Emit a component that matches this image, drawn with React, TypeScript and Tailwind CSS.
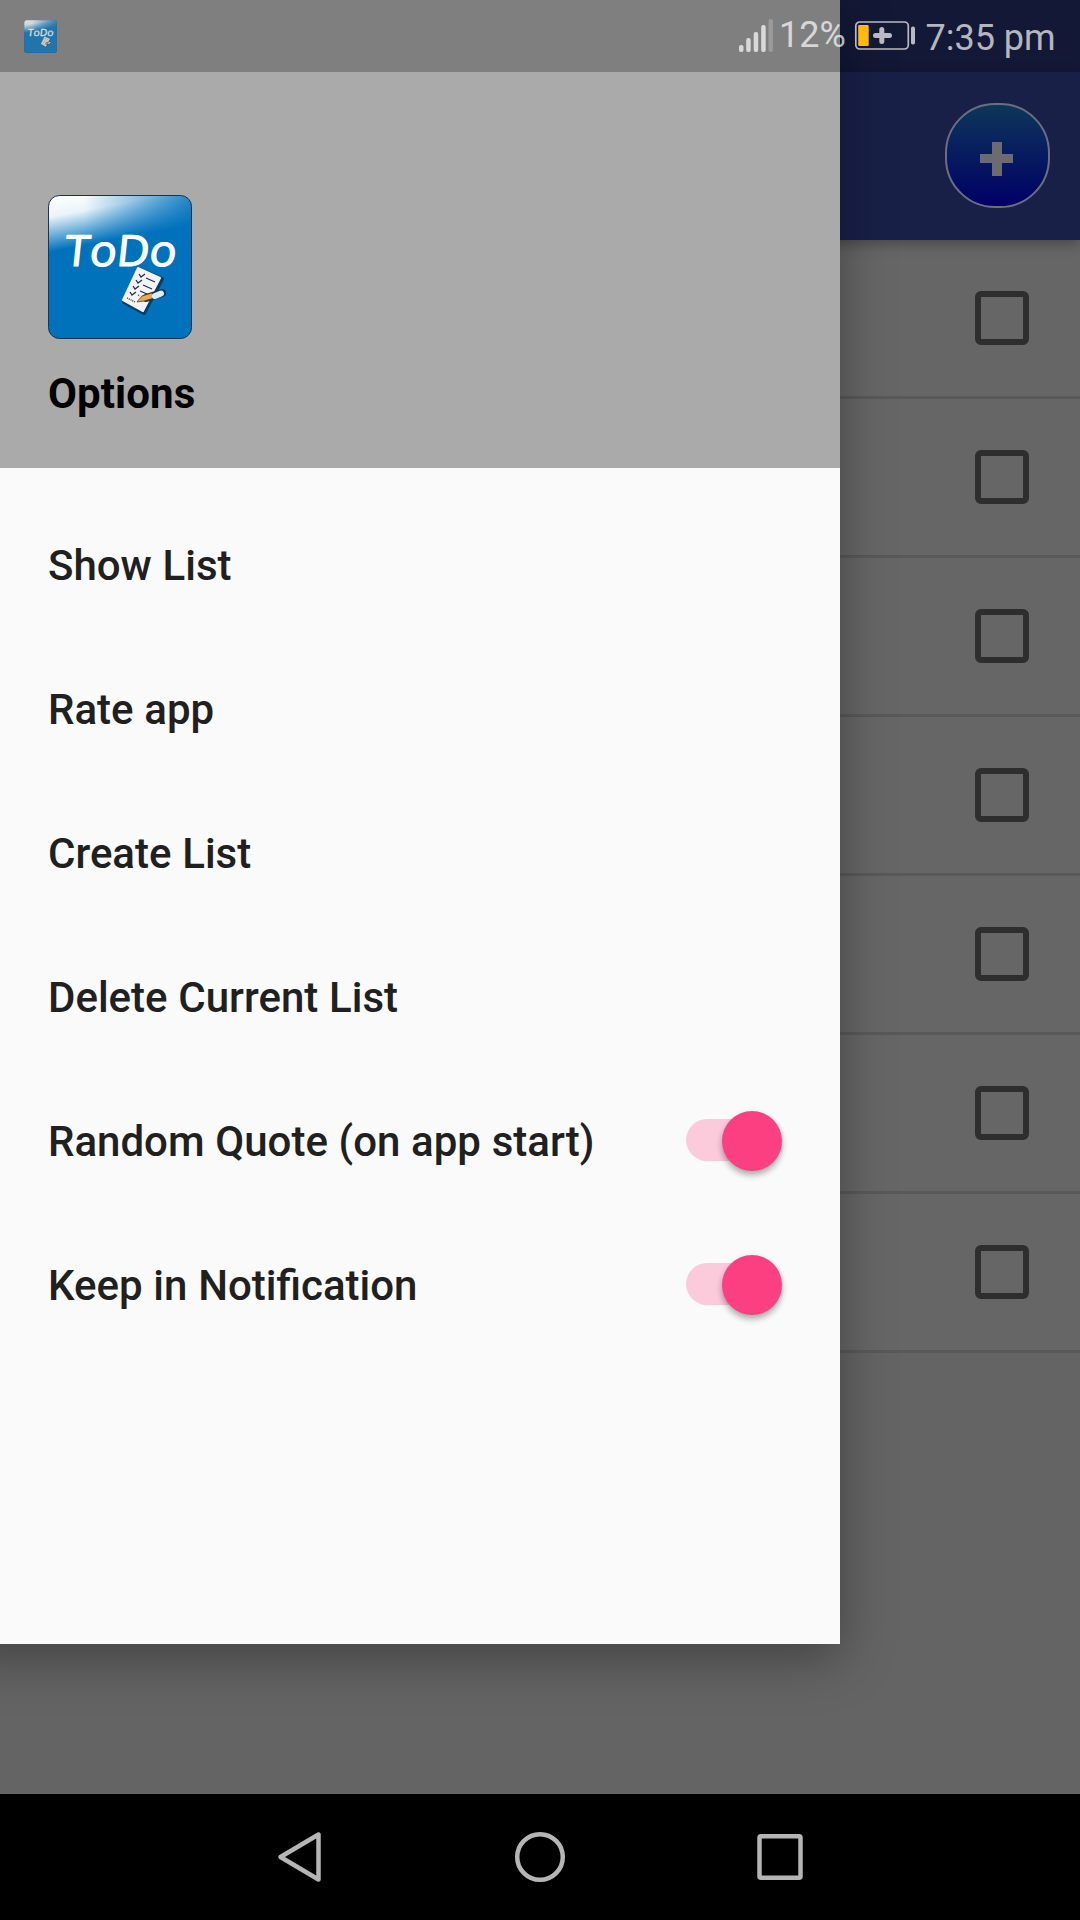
const menuItems = [
  { label: "Show List" },
  { label: "Rate app" },
  { label: "Create List" },
  { label: "Delete Current List" },
  { label: "Random Quote (on app start)", toggle: true },
  { label: "Keep in Notification", toggle: true },
];

function AppLogo({ className, id }: { className: string; id: string }) {
  return (
    <svg className={className} viewBox="0 0 144 144">
      <defs>
        <linearGradient id={id + "-shine"} gradientUnits="userSpaceOnUse" x1="18" y1="0" x2="28" y2="52">
          <stop offset="0" stopColor="#fff" />
          <stop offset="0.35" stopColor="#fff" stopOpacity="0.92" />
          <stop offset="1" stopColor="#fff" stopOpacity="0" />
        </linearGradient>
        <linearGradient id={id + "-fade"} x1="0" y1="0" x2="1" y2="0">
          <stop offset="0.25" stopColor="#0072bc" stopOpacity="0" />
          <stop offset="1" stopColor="#0072bc" stopOpacity="0.8" />
        </linearGradient>
      </defs>
      <rect x="0.5" y="0.5" width="143" height="143" rx="11" fill="#0072bc" />
      <rect x="0.5" y="0.5" width="143" height="143" rx="11" fill={`url(#${id}-shine)`} />
      <rect x="0.5" y="0.5" width="143" height="143" rx="11" fill={`url(#${id}-fade)`} />
      <rect x="0.5" y="0.5" width="143" height="143" rx="11" fill="none" stroke="#173450" />
      <text
        transform="translate(15.5 71) skewX(-6)"
        fill="#fff"
        stroke="#fff"
        strokeWidth="1.2"
        strokeLinejoin="round"
        fontSize="43"
        textLength="112"
        lengthAdjust="spacingAndGlyphs"
        className="font-['Open_Sans']"
      >
        ToDo
      </text>
      <path d="M91 74 L114 84 L96 118 L76 107 Z" fill="#083d68" stroke="#083d68" strokeWidth="4" strokeLinejoin="round" />
      <path d="M90 73 L112 83 L95 116 L75 105 Z" fill="#f4f4f5" stroke="#f4f4f5" strokeWidth="2" strokeLinejoin="round" />
      <g fill="none" stroke="#25304a" strokeWidth="1.3">
        <path d="M91 79l2 3 4-3M88 85l2 3 4-3M85 91l2 3 4-3M82 97l2 3 4-3" />
        <path d="M98 83l9 4M95 90l9 4M92 96l7 3" />
        <path d="M79 103l8 4M90 100l2 1" strokeDasharray="1 1" />
      </g>
      <path d="M98 103 L114 98" stroke="#17344f" strokeWidth="8" strokeLinecap="round" />
      <path d="M89 107 L94 101 L104 98 L106 103 L96 106 Z" fill="#eda94f" stroke="#5b4023" strokeWidth="0.8" />
      <path d="M107 101 L113 98.5" stroke="#d9eefb" strokeWidth="6" strokeLinecap="round" />
    </svg>
  );
}

function Toggle() {
  return (
    <div className="relative h-[60px] w-24">
      <div className="absolute top-[9px] left-0 h-[42px] w-[84px] rounded-full bg-[#fbcadb]" />
      <div className="absolute top-[0.5px] right-[0.5px] size-[60px] rounded-full bg-[#fb3f80] shadow-[0_4px_6px_rgba(0,0,0,0.32)]" />
    </div>
  );
}

function StatusBar() {
  return (
    <div className="absolute inset-x-0 top-0 flex h-[72px] items-start justify-between bg-black/25 pl-6">
      <AppLogo id="small" className="mt-5 size-[33px] opacity-75" />
      <div className="flex items-start text-[36px] leading-[42px] text-white/70">
        <svg className="mt-[18px] h-9 w-9" viewBox="0 0 36 36" fill="currentColor">
          <rect x="2" y="27" width="4.5" height="7" rx="2" />
          <rect x="9.2" y="20" width="4.5" height="14" rx="2" />
          <rect x="16.7" y="14" width="4.5" height="20" rx="2" />
          <rect x="24.2" y="7" width="4.5" height="27" rx="2" />
          <rect x="31.5" y="1" width="4.5" height="33" rx="2" opacity="0.3" />
        </svg>
        <span className="mt-3.5 ml-1.5 w-[75px]">12%</span>
        <svg className="mt-5 h-8 w-[62px]" viewBox="0 0 62 32">
          <rect x="1.8" y="2" width="52.5" height="27" rx="4" fill="none" stroke="currentColor" strokeWidth="1.7" />
          <rect x="4.2" y="5" width="10.5" height="21" rx="1" fill="#ffb90f" />
          <path d="M27.8 9.5v12M21.5 15.5h14" stroke="currentColor" strokeWidth="5" strokeLinecap="round" />
          <rect x="57" y="6.5" width="4" height="18" rx="1.8" fill="currentColor" />
        </svg>
        <span className="mt-[17px] ml-[9.5px] w-[154.5px]">7:35 pm</span>
      </div>
    </div>
  );
}

function NavBar() {
  return (
    <div className="absolute inset-x-0 bottom-0 flex h-[126px] items-center justify-center gap-[180px] bg-black">
      <svg className="size-[60px]" viewBox="0 0 60 60" fill="none" stroke="#b5b5b5" strokeWidth="4.5" strokeLinejoin="round">
        <path d="M10.5 30 L48.5 7.5 V52.5 Z" />
      </svg>
      <svg className="size-[60px]" viewBox="0 0 60 60" fill="none" stroke="#b5b5b5" strokeWidth="4.5">
        <circle cx="30" cy="30" r="22.8" />
      </svg>
      <svg className="size-[60px]" viewBox="0 0 60 60" fill="none" stroke="#b5b5b5" strokeWidth="4.5">
        <rect x="9.5" y="9.3" width="41" height="41.5" rx="1.5" />
      </svg>
    </div>
  );
}

export default function App() {
  return (
    <div className="relative h-[1920px] w-[1080px] overflow-hidden bg-[#646464] font-[Roboto,sans-serif]">
      <div className="h-[72px] bg-[#192048]" />
      <header className="relative flex h-[168px] items-center justify-end bg-[#192048] pr-[30px] shadow-[0_4px_12px_rgba(0,0,0,0.3)]">
        <button className="mb-0.5 flex size-[105px] items-center justify-center rounded-[50px] border-2 border-[#6b6e80] bg-linear-to-b/srgb from-[#0d3659] to-[#000066]">
          <svg className="mt-[7px] mr-0.5 h-[34px] w-[33px]" viewBox="0 0 33 34" fill="#6c6c70">
            <path d="M12 0h10v12h11v9H22v13H12V21H0v-9h12z" />
          </svg>
        </button>
      </header>
      <ul>
        {Array.from({ length: 7 }, (_, i) => (
          <li key={i} className="flex h-[159px] items-center justify-end border-b-3 border-[#595959] bg-[#666] pr-[51px]">
            <span className="size-[54px] rounded-md border-6 border-[#2e2e2e]" />
          </li>
        ))}
      </ul>

      {/* drawer runs past the left edge so its shadow stays even along the bottom */}
      <aside className="absolute top-0 -left-12 flex h-[1644px] w-[888px] flex-col bg-[#fafafa] pl-12 shadow-[0_14px_48px_rgba(0,0,0,0.34)]">
        <div className="flex h-[468px] flex-col items-start bg-[#aaa] pt-[195px] pl-12">
          <AppLogo id="logo" className="size-36" />
          <h1 className="mt-[30px] text-[42px] leading-[50px] font-bold tracking-[0.1px] text-black">Options</h1>
        </div>
        <nav className="pt-6">
          {menuItems.map((item) => (
            <div key={item.label} className="flex h-36 items-center justify-between pr-[58px] pl-12">
              <span className="pt-1 text-[42px] leading-[50px] font-medium text-[#202020] [word-spacing:0.3px]">
                {item.label}
              </span>
              {item.toggle && <Toggle />}
            </div>
          ))}
        </nav>
      </aside>

      <StatusBar />
      <NavBar />
    </div>
  );
}
